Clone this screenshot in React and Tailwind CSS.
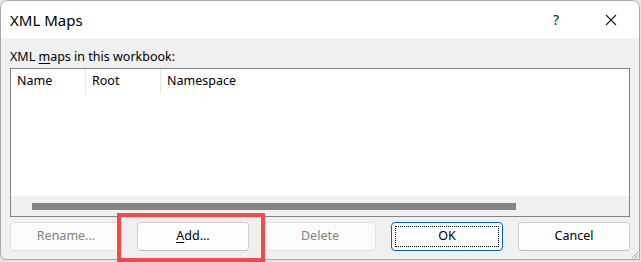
import React from 'react';

const font = { fontFamily: '"Noto Sans", "Open Sans", sans-serif' };

const DialogButton = ({ children, disabled, focused }) => (
  <button
    className={
      focused
        ? 'relative w-[112px] h-[29px] rounded-[4px] border border-[#0067c0] bg-[#fdfdfd] text-[12.5px] text-black'
        : disabled
        ? 'w-[112px] h-[29px] rounded-[4px] border border-[#e0e0e0] bg-[#fbfbfb] text-[12.5px] text-[#838383]'
        : 'w-[112px] h-[29px] rounded-[4px] border border-[#d0d0d0] border-b-[#bdbdbd] bg-[#fdfdfd] text-[12.5px] text-black'
    }
  >
    {focused && (
      <span className="absolute inset-[3px] border border-dotted border-black" />
    )}
    <span className="relative">{children}</span>
  </button>
);

const App = () => {
  return (
    <div className="relative w-[641px] h-[262px] bg-[#e6e6e6] overflow-hidden" style={font}>
      {/* Dialog window */}
      <div className="w-[640px] h-[260px] bg-[#f0f0f0] border border-[#a9a9a9] rounded-t-[8px] rounded-bl-[6px] overflow-hidden flex flex-col">
        {/* Title bar */}
        <div className="h-[37px] bg-white flex items-center shrink-0">
          <div className="pl-[9px] pt-[2px] text-[15px] text-black">XML Maps</div>
          <div className="ml-auto flex items-center">
            <span className="text-[14px] text-[#1a1a1a] mr-[45px]">?</span>
            <svg width="14" height="14" viewBox="0 0 14 14" className="mr-[21px]">
              <path d="M2 2 L12 12 M12 2 L2 12" stroke="#1a1a1a" strokeWidth="1.1" />
            </svg>
          </div>
        </div>

        {/* Body */}
        <div className="flex-1 px-[9px] pt-[11px] flex flex-col">
          <div className="text-[12.5px] text-black leading-[16px] h-[19px]">
            XML <u className="underline-offset-2">m</u>aps in this workbook:
          </div>

          {/* List view */}
          <div className="w-[620px] h-[149px] border border-[#828282] bg-white flex flex-col">
            <div className="h-[25px] flex items-center text-[12.5px] text-black">
              <div className="w-[75px] h-full pl-[6px] flex items-center border-r border-[#e5e5e5]">Name</div>
              <div className="w-[75px] h-full pl-[6px] flex items-center border-r border-[#e5e5e5]">Root</div>
              <div className="pl-[6px]">Namespace</div>
            </div>
            <div className="flex-1" />
            <div className="h-[20px] bg-[#f0f0f0] flex items-center pl-[21px]">
              <div className="w-[484px] h-[7px] bg-[#858585]" />
            </div>
          </div>

          {/* Buttons */}
          <div className="mt-[5px] flex gap-[15px]">
            <DialogButton disabled>Rename...</DialogButton>
            <DialogButton>
              <u className="underline-offset-2">A</u>dd...
            </DialogButton>
            <DialogButton disabled>Delete</DialogButton>
            <DialogButton focused>OK</DialogButton>
            <DialogButton>Cancel</DialogButton>
          </div>
        </div>
      </div>

      {/* Resize grip */}
      <svg className="absolute right-[2px] bottom-[3px]" width="10" height="10" viewBox="0 0 10 10">
        <path d="M9 3 L3 9 M9 6 L6 9" stroke="#a0a0a0" strokeWidth="1" />
      </svg>

      {/* Red highlight around Add */}
      <div className="absolute left-[117px] top-[213px] w-[148px] h-[49px] border-[4px] border-[#f24a4a]" />
    </div>
  );
};

export default App;
